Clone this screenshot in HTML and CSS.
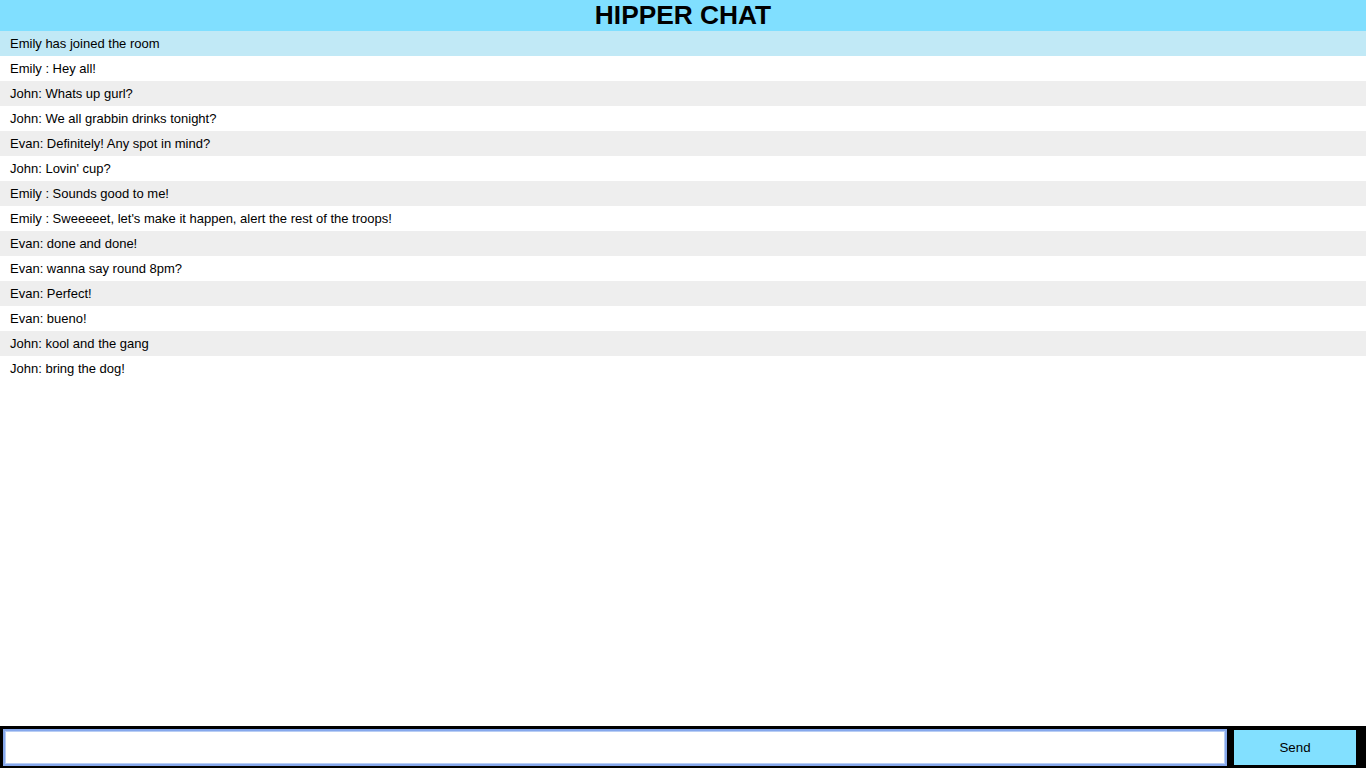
FILE: index.html
```html
<!DOCTYPE html>
<html>
<head>
<meta charset="utf-8">
<title>Hipper Chat</title>
<link rel="stylesheet" href="styles.css">
</head>
<body>
<header class="title">HIPPER CHAT</header>
<ul class="messages">
  <li class="notice">Emily has joined the room</li>
  <li>Emily : Hey all!</li>
  <li>John: Whats up gurl?</li>
  <li>John: We all grabbin drinks tonight?</li>
  <li>Evan: Definitely! Any spot in mind?</li>
  <li>John: Lovin' cup?</li>
  <li>Emily : Sounds good to me!</li>
  <li>Emily : Sweeeeet, let's make it happen, alert the rest of the troops!</li>
  <li>Evan: done and done!</li>
  <li>Evan: wanna say round 8pm?</li>
  <li>Evan: Perfect!</li>
  <li>Evan: bueno!</li>
  <li>John: kool and the gang</li>
  <li>John: bring the dog!</li>
</ul>
<form class="composer">
  <input class="composer-input" type="text" autocomplete="off">
  <button class="composer-send" type="button">Send</button>
</form>
</body>
</html>
```
FILE: styles.css
```css
* { box-sizing: border-box; }
html, body {
  margin: 0;
  padding: 0;
  height: 100%;
}
body {
  font-family: "Liberation Sans", Arial, sans-serif;
  font-size: 13px;
  color: #000;
  background: #fff;
}
.title {
  height: 31px;
  line-height: 31px;
  background: #80dfff;
  text-align: center;
  font-size: 26.3px;
  font-weight: bold;
}
.messages {
  list-style: none;
  margin: 0;
  padding: 0;
}
.messages li {
  padding: 5px 10px;
  line-height: 15px;
}
.messages li:nth-child(odd) { background: #eee; }
.messages li.notice { background: #c1e9f6; }
.composer {
  position: fixed;
  left: 0;
  right: 0;
  bottom: 0;
  background: #000;
  padding: 3px 3px 2px 3px;
  display: flex;
  align-items: center;
  height: 42px;
}
.composer-input {
  width: 90%;
  height: 37px;
  margin: 0 0.5% 0 0;
  border: 2px solid #86a8ec;
  box-shadow: inset 0 0 0 1px #b8cdf4;
  background: #fff;
  padding: 0 10px;
  font: 13px "Liberation Sans", Arial, sans-serif;
  outline: none;
}
.composer-send {
  width: 9%;
  height: 35px;
  background: rgb(130, 224, 255);
  border: none;
  padding: 0;
  font: 13.33px "Liberation Sans", Arial, sans-serif;
  color: #000;
}
```
